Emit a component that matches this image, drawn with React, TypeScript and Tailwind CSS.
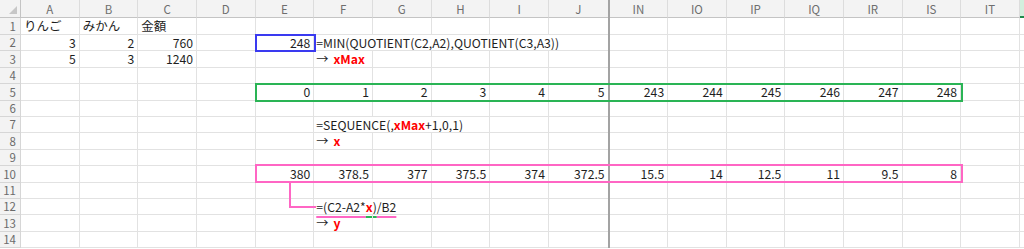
import React from 'react';

type Cell = { v: React.ReactNode; r?: boolean; noR?: boolean };

const LEFT = ['A', 'B', 'C', 'D', 'E', 'F', 'G', 'H', 'I', 'J'];
const RIGHT = ['IN', 'IO', 'IP', 'IQ', 'IR', 'IS', 'IT'];

const Red = ({ children }: { children: React.ReactNode }) => (
  <span className="font-bold text-[#ff0000]">{children}</span>
);

const Arrow = ({ children }: { children: React.ReactNode }) => (
  <>
    <span>→</span>
    <span className="ml-[5px] font-bold text-[#ff0000]">{children}</span>
  </>
);

const num = (v: string | number): Cell => ({ v: String(v), r: true });

const ROWS: Record<number, Record<string, Cell>> = {
  1: {
    A: { v: <span className="text-[12.5px] pl-[1px]">りんご</span> },
    B: { v: <span className="text-[12.5px] pl-[1px]">みかん</span> },
    C: { v: <span className="text-[12.5px] pl-[1px]">金額</span> },
  },
  2: {
    A: num(3),
    B: num(2),
    C: num(760),
    E: num(248),
    F: { v: '=MIN(QUOTIENT(C2,A2),QUOTIENT(C3,A3))', noR: true },
    G: { v: '', noR: true },
    H: { v: '', noR: true },
    I: { v: '', noR: true },
  },
  3: {
    A: num(5),
    B: num(3),
    C: num(1240),
    F: { v: <Arrow>xMax</Arrow> },
  },
  5: {
    E: num(0),
    F: num(1),
    G: num(2),
    H: num(3),
    I: num(4),
    J: num(5),
    IN: num(243),
    IO: num(244),
    IP: num(245),
    IQ: num(246),
    IR: num(247),
    IS: num(248),
  },
  7: {
    F: {
      v: (
        <>
          =SEQUENCE(,<Red>xMax</Red>+1,0,1)
        </>
      ),
      noR: true,
    },
    G: { v: '', noR: true },
  },
  8: {
    F: { v: <Arrow>x</Arrow> },
  },
  10: {
    E: num(380),
    F: num('378.5'),
    G: num(377),
    H: num('375.5'),
    I: num(374),
    J: num('372.5'),
    IN: num('15.5'),
    IO: num(14),
    IP: num('12.5'),
    IQ: num(11),
    IR: num('9.5'),
    IS: num(8),
  },
  12: {
    F: {
      v: (
        <>
          <span className="underline decoration-[#ff66c4] decoration-2 underline-offset-[4px]">=(C2-A2*</span>
          <span className="underline decoration-[#2ab455] decoration-2 underline-offset-[4px]">
            <Red>x</Red>)
          </span>
          <span className="underline decoration-[#ff66c4] decoration-2 underline-offset-[4px]">/B2</span>
        </>
      ),
      noR: true,
    },
  },
  13: {
    F: { v: <Arrow>y</Arrow> },
  },
};

function CellBox({ cell, wide, last }: { cell?: Cell; wide: boolean; last?: boolean }) {
  const noR = last || cell?.noR;
  return (
    <div
      className={[
        'shrink-0 flex items-center whitespace-nowrap border-b border-[#e2e2e2] text-[12.2px] text-[#1e1e1e] leading-none pt-[1px]',
        wide ? 'w-[58.67px]' : 'w-[58.6px]',
        noR ? '' : 'border-r',
        cell?.r ? 'justify-end pr-[3px]' : 'pl-[2px]',
      ].join(' ')}
    >
      {cell?.v}
    </div>
  );
}

function Row({ n, h }: { n: number; h: string }) {
  const cells = ROWS[n] || {};
  return (
    <div className={'flex ' + h}>
      <div className="w-[21px] shrink-0 bg-[#f3f3f3] border-r border-b border-[#d6d6d6] text-[11.5px] text-[#6b6b6b] flex items-center justify-end pr-[4px] leading-none pt-[1px]">
        {n}
      </div>
      {LEFT.map((c) => (
        <CellBox key={c} cell={cells[c]} wide last={c === 'J'} />
      ))}
      <div className="w-[2px] shrink-0 bg-[#a3a3a3]" />
      {RIGHT.map((c) => (
        <CellBox key={c} cell={cells[c]} wide={false} />
      ))}
      <div className="flex-1 border-b border-[#e2e2e2]" />
    </div>
  );
}

export default function App() {
  const rowNums = [2, 3, 4, 5, 6, 7, 8, 9, 10, 11, 12, 13, 14];
  return (
    <div className="relative w-[1024px] h-[249px] overflow-hidden bg-white font-['Noto_Sans_CJK_JP',sans-serif]">
      {/* header */}
      <div className="flex h-[18px]">
        <div className="relative w-[21px] shrink-0 bg-[#f3f3f3] border-r border-b border-[#c4c4c4]">
          <div className="absolute right-[3px] bottom-[3px] w-0 h-0 border-l-[8px] border-l-transparent border-b-[8px] border-b-[#c7c7c7]" />
        </div>
        {LEFT.map((c) => (
          <div
            key={c}
            className={
              'w-[58.67px] shrink-0 bg-[#f3f3f3] border-b border-[#c4c4c4] flex items-center justify-center text-[11.5px] text-[#6e6e6e] leading-none pt-[3px] ' +
              (c === 'J' ? '' : 'border-r border-r-[#dcdcdc]')
            }
          >
            {c}
          </div>
        ))}
        <div className="w-[2px] shrink-0 bg-[#a3a3a3]" />
        {RIGHT.map((c) => (
          <div
            key={c}
            className="w-[58.6px] shrink-0 bg-[#f3f3f3] border-b border-r border-[#c4c4c4] border-r-[#dcdcdc] flex items-center justify-center text-[11.5px] text-[#6e6e6e] leading-none pt-[3px]"
          >
            {c}
          </div>
        ))}
        <div className="flex-1 bg-[#d3eedd] border-b-2 border-[#1f8a4c]" />
      </div>
      <Row n={1} h="h-[17px]" />
      {rowNums.map((n) => (
        <Row key={n} n={n} h="h-[16.4px]" />
      ))}

      {/* overlays */}
      <div className="absolute left-[255px] top-[34px] w-[61px] h-[18px] border-2 border-[#3a3af0]" />
      <div className="absolute left-[255px] top-[83px] w-[708px] h-[19px] border-2 border-[#2ab455]" />
      <div className="absolute left-[255px] top-[164px] w-[708px] h-[19px] border-2 border-[#ff66c4]" />
      <div className="absolute left-[289px] top-[183px] w-[27px] h-[25px] border-l-2 border-b-2 border-[#ff66c4]" />
    </div>
  );
}
